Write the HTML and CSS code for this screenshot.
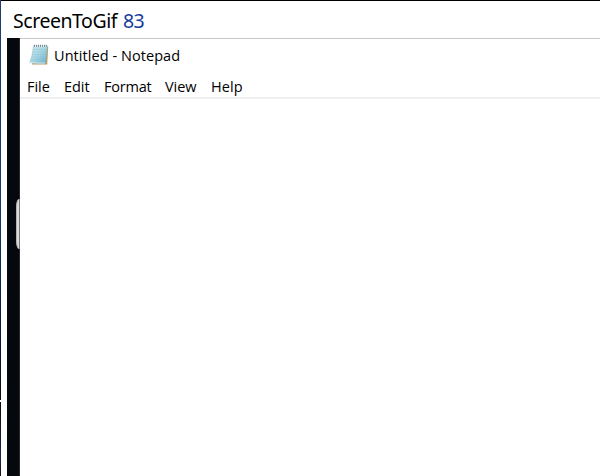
FILE: index.html
```html
<!DOCTYPE html>
<html lang="en">
<head>
<meta charset="utf-8">
<title>ScreenToGif</title>
<link rel="stylesheet" href="styles.css">
</head>
<body>
<div class="desktop">
  <main class="recorder">
    <header class="recorder-title"><span class="app-name">ScreenToGif</span><span class="frame-count">83</span></header>
    <div class="capture">
      <div class="backdrop"><span class="shape"></span></div>
      <section class="notepad">
        <header class="title-bar">
          <svg class="icon" width="20" height="22" viewBox="0 0 20 22">
            <defs><linearGradient id="paper" x1="0" y1="0" x2="1" y2="1"><stop offset="0" stop-color="#d3edf3"/><stop offset=".5" stop-color="#a5d5e3"/><stop offset="1" stop-color="#65afc7"/></linearGradient></defs>
            <path d="M5 2.5H19.2L18.2 20.5H3z" fill="#b79b68"/>
            <path d="M4.5 2H18.4L16.5 19.4Q8 19.8 .7 18.7Q3.5 12 4.5 2z" fill="url(#paper)" stroke="#82b3bf" stroke-width=".5"/>
            <path d="M4.5 5.5H17.5M4 8H17.2M3.6 10.5H17M3 13H16.7M2.3 15.5H16.4" stroke="#87bdca" stroke-width=".5" opacity=".7"/>
            <path d="M1 18.5Q8 19.4 16 19" fill="none" stroke="#eef4f2" stroke-width=".8"/>
            <path d="M5 2H18" stroke="#e1eff0" stroke-width="2"/>
            <path d="M5.5 .8V2.8M7.5 .8V2.8M9.5 .8V2.8M11.5 .8V2.8M13.5 .8V2.8M15.5 .8V2.8M17.3 .8V2.8" stroke="#61777b" stroke-width=".9"/>
          </svg>
          <span class="document-name">Untitled - Notepad</span>
        </header>
        <nav class="menu"><span class="file">File</span><span class="edit">Edit</span><span class="format">Format</span><span class="view">View</span><span class="help">Help</span></nav>
        <div class="editor"></div>
      </section>
    </div>
  </main>
</div>
</body>
</html>
```
FILE: styles.css
```css
* { box-sizing: border-box; }
body { margin: 0; background: #fff; font-family: "Open Sans", "Noto Sans", sans-serif; color: #000; }
.desktop {
  height: 476px;
  overflow: hidden;
  padding: 1px 0 0 1px;
  background: linear-gradient(#233b70 0, #173c70 200px, #0b2147 300px, #080b19 400px, #fff 400px, #fff 402px, #080b12 402px, #20264b 458px, #11131e 476px) left / 1px 100% no-repeat, #000;
}
.recorder { height: 475px; padding-left: 6px; background: #fff; display: flex; flex-direction: column; }
.recorder-title { height: 37px; flex: none; padding-left: 6px; display: flex; align-items: center; gap: 6px; font-family: "Noto Sans", sans-serif; font-size: 19.5px; line-height: 37px; padding-top: 1px; white-space: nowrap; }
.app-name { width: 104px; letter-spacing: -.45px; }
.frame-count { color: #143c9c; letter-spacing: -.6px; }
.capture { flex: 1; display: flex; }
.backdrop { width: 13px; background: #05080c; border-right: 1px solid #555; border-image: linear-gradient(#29292b 161px, #777 161px, #777 211px, #29292b 211px) 1; border-width: 0 1px 0 0; display: flex; align-items: flex-start; justify-content: flex-end; }
.shape { width: 3px; height: 50px; margin-top: 161px; background: #dadada; border-left: 1px solid #b0b0b0; border-radius: 3px 0 0 3px / 8px 0 0 8px; }
.notepad { flex: 1; background: #fff; border-top: 1px solid #c8c8c8; font-size: 14.5px; }
.title-bar { height: 34px; padding: 5px 0 0 9px; display: flex; align-items: flex-start; gap: 5px; }
.icon { flex: none; }
.document-name { line-height: 24px; white-space: nowrap; letter-spacing: .06px; }
.menu { height: 26px; border-bottom: 2px solid #efefef; display: flex; padding-left: 7px; line-height: 28px; letter-spacing: -.05px; }
.menu span { white-space: nowrap; }
.file { width: 37px; }
.edit { width: 40px; }
.format { width: 61px; letter-spacing: -.2px; }
.view { width: 46px; }
.help { letter-spacing: .1px; }
```
